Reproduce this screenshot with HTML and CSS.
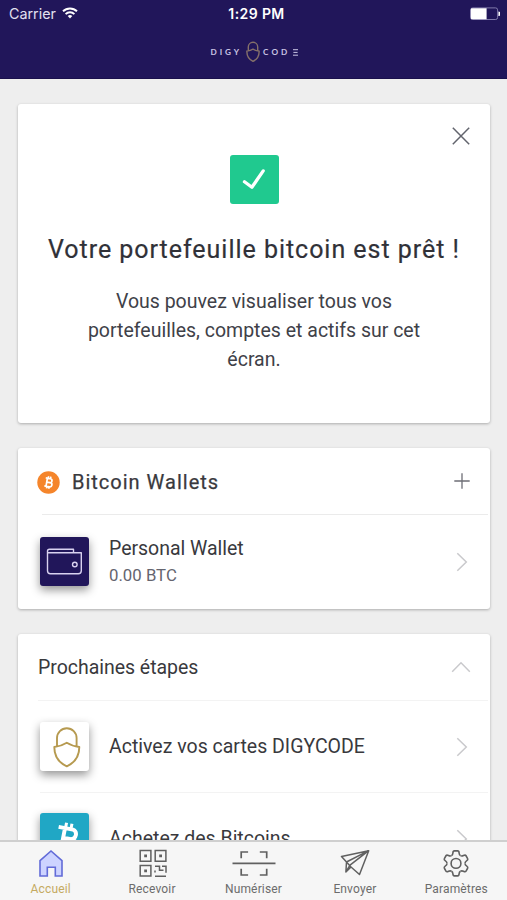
FILE: index.html
```html
<!DOCTYPE html>
<html lang="fr">
<head>
<meta charset="utf-8">
<title>Digycode</title>
<link rel="stylesheet" href="styles.css">
</head>
<body>
<div class="app">
  <header class="header">
    <div class="status">
      <div class="carrier"><span>Carrier</span>
        <svg width="16" height="12" viewBox="0 0 16 12" fill="none" stroke="#fff" stroke-width="1.9"><path d="M1 4.3a10 10 0 0 1 14 0M3.6 7.1a6.2 6.2 0 0 1 8.8 0"/><path d="M8 11.4L5.7 9.1a3.3 3.3 0 0 1 4.6 0z" fill="#fff" stroke="none"/></svg>
      </div>
      <div class="time">1:29 PM</div>
      <div class="battery">
        <svg width="30" height="14" viewBox="0 0 30 14"><rect x=".6" y=".9" width="27" height="11.6" rx="2" fill="none" stroke="#8b84b4" stroke-width=".9"/><path d="M2 1.2h14.6v11H2a1.2 1.2 0 0 1-1.2-1.2V2.4A1.2 1.2 0 0 1 2 1.2z" fill="#fff"/><path d="M28.4 4.6a2.2 2.2 0 0 1 0 4.4z" fill="#fff"/></svg>
      </div>
    </div>
    <div class="brand">
      <span class="digy">DIGY</span>
      <svg width="14" height="22" viewBox="0 0 14 22" fill="none" stroke="#85706a" stroke-width="1.4"><path d="M2.300 9.500V6a4.700 4.700 0 0 1 9.400 0v3.500M.9 10.100Q4.400 9.800 7 8.200 9.600 9.800 13.100 10.100C13.300 15 10.500 18.600 7 20.300 3.500 18.600.7 15 .9 10.100z"/></svg>
      <span class="code">COD</span>
      <svg class="bars" width="5" height="7" viewBox="0 0 5 7" stroke="#c9c4e3" stroke-width="1"><path d="M0 .7h5M.4 3.400h4.200M0 6.200h5"/></svg>
    </div>
  </header>

  <main class="content">
    <section class="card welcome">
      <svg class="close" width="18" height="18" viewBox="0 0 18 18" stroke="#62646d" stroke-width="1.500"><path d="M.8.8l16.400 16.400M17.200.8L.8 17.200"/></svg>
      <div class="check"><svg width="49" height="49" viewBox="0 0 49 49" fill="none" stroke="#fff" stroke-width="3.300" stroke-linecap="round" stroke-linejoin="round"><path d="M14.500 26.800l7.400 5.500 11.300-16.400"/></svg></div>
      <h1>Votre portefeuille bitcoin est prêt !</h1>
      <p>Vous pouvez visualiser tous vos<br>portefeuilles, comptes et actifs sur cet<br>écran.</p>
    </section>

    <section class="card wallets">
      <div class="wallets-head">
        <svg width="23" height="23" viewBox="0 0 23 23"><circle cx="11.500" cy="11.500" r="11.200" fill="#f5852b"/><g transform="rotate(10 11.500 11.500)" fill="none" stroke="#fff" stroke-width="1.700"><path d="M8 7.500h4.700a1.900 1.900 0 0 1 0 3.900H9.600h3.600a2.100 2.100 0 0 1 0 4.200H8M9.700 7.500v8.100M10.600 5.300v2M12.800 5.300v2M10.600 15.600v2M12.800 15.600v2"/></g></svg>
        <h2>Bitcoin Wallets</h2>
        <svg class="plus" width="16" height="16" viewBox="0 0 16 16" stroke="#6d6e76" stroke-width="1.300"><path d="M8 .3v15.400M.3 8h15.400"/></svg>
      </div>
      <div class="row wallet-row">
        <div class="tile navy"><svg width="49" height="49" viewBox="0 0 49 49" fill="none" stroke="#d9d2f0" stroke-width="1.400" stroke-linejoin="round"><path d="M33.500 15.500v-3.300H9.500a2 2 0 0 0-2 2v19.600a3 3 0 0 0 3 3h27.800a3 3 0 0 0 3-3V15.700H8"/><circle cx="34.800" cy="27.500" r="2.300"/></svg></div>
        <div class="label"><div class="name">Personal Wallet</div><div class="amount">0.00 BTC</div></div>
        <svg class="chevron" width="12" height="20" viewBox="0 0 12 20" fill="none" stroke="#c9c9cc" stroke-width="1.500"><path d="M1.300 1.200L10.300 10l-9 8.800"/></svg>
      </div>
    </section>

    <section class="card steps">
      <div class="steps-head"><h3>Prochaines étapes</h3>
        <svg width="20" height="12" viewBox="0 0 20 12" fill="none" stroke="#c9c9cc" stroke-width="1.500"><path d="M1.200 10.700L10 1.700l8.800 9"/></svg>
      </div>
      <div class="row step">
        <div class="tile white"><svg width="49" height="49" viewBox="0 0 49 49" fill="none" stroke="#b69a50" stroke-width="1.900" stroke-linejoin="round"><path d="M17 24V16a9.800 9.800 0 0 1 19.600 0v8M14.300 25Q21.500 24.200 26.800 20.800 32 24.200 39.300 25C39.300 34 34.500 40.800 26.800 44.300 19 40.800 14.300 34 14.300 25z"/></svg></div>
        <div class="name">Activez vos cartes DIGYCODE</div>
        <svg class="chevron" width="12" height="20" viewBox="0 0 12 20" fill="none" stroke="#c9c9cc" stroke-width="1.500"><path d="M1.300 1.200L10.300 10l-9 8.800"/></svg>
      </div>
      <div class="row step">
        <div class="tile teal"><svg width="49" height="49" viewBox="0 0 49 49" fill="none" stroke="#fff" stroke-width="3.900"><g transform="translate(1 1) rotate(11 28 25)"><path d="M15.500 15H30a5 5 0 0 1 0 9.800H22h9a5.500 5.500 0 0 1 0 11H16M22 15v20"/><path stroke-width="3" d="M22.500 9.500v5M28 9.500v5M22.500 36v4M28 36v4"/></g></svg></div>
        <div class="name">Achetez des Bitcoins</div>
        <svg class="chevron" width="12" height="20" viewBox="0 0 12 20" fill="none" stroke="#c9c9cc" stroke-width="1.500"><path d="M1.300 1.200L10.300 10l-9 8.800"/></svg>
      </div>
    </section>
  </main>

  <nav class="tabs">
    <div class="tab active">
      <svg width="44" height="32" viewBox="0 0 44 32" stroke="#626bd8" stroke-width="1.600" fill="#cdd3ff"><path d="M11 12.600L22 3l11 9.600V28h-6.700v-8.700h-8V28H11z"/></svg>
      <span>Accueil</span>
    </div>
    <div class="tab">
      <svg width="44" height="32" viewBox="0 0 44 32" stroke="#606060" stroke-width="1.500" fill="none"><path d="M9.200 2.500h10.700v10.700H9.200zM24.200 2.500h10.700v10.700H24.200zM9.200 17.400h10.700v10.700H9.200zM24 18.200h4.500v4h4M31 18.200h4v6.500M24 24.500v-2M24 28.200h11"/><g fill="#606060" stroke="none"><path d="M13.200 6.500H16v2.800h-2.800zM28.200 6.500H31v2.800h-2.800zM13.200 21.400H16v2.800h-2.800z"/></g></svg>
      <span>Recevoir</span>
    </div>
    <div class="tab">
      <svg width="44" height="32" viewBox="0 0 44 32" stroke="#606060" stroke-width="1.700" fill="none"><path d="M.5 15.400h43M9.200 10.300V4h6.900M27.800 4h6.900v6.300M9.200 20.700V27h6.900M27.800 27h6.900v-6.300"/></svg>
      <span>Numériser</span>
    </div>
    <div class="tab">
      <svg width="44" height="32" viewBox="0 0 44 32" stroke="#606060" stroke-width="1.500" fill="none" stroke-linejoin="round"><path d="M35.700 2.700L8.500 8.500l5 5.500-.6 10L18 19l8.500 7.500zM35.700 2.700L13.500 14l4.500 5M35.700 2.700L17 17.200 12.900 24"/></svg>
      <span>Envoyer</span>
    </div>
    <div class="tab gear">
      <svg width="44" height="32" viewBox="0 0 44 32" stroke="#606060" stroke-width="1.600" fill="none" stroke-linejoin="round"><defs><path id="tooth" d="M-4.500-7.800Q-3.200-8.600-3.100-10.400-3-12.500-1.600-12.500H1.600Q3-12.500 3.100-10.400 3.200-8.600 4.500-7.800"/></defs><g transform="translate(22 15.400)"><circle r="4.900"/><use href="#tooth"/><use href="#tooth" transform="rotate(60)"/><use href="#tooth" transform="rotate(120)"/><use href="#tooth" transform="rotate(180)"/><use href="#tooth" transform="rotate(240)"/><use href="#tooth" transform="rotate(300)"/></g></svg>
      <span>Paramètres</span>
    </div>
  </nav>
</div>
</body>
</html>
```

FILE: styles.css
```css
* { box-sizing: border-box; }
body { margin: 0; background: #eeeeee; color: #39393d; font-family: Roboto, "Liberation Sans", sans-serif; }
svg { display: block; flex: none; }
h1, h2, h3, p { margin: 0; font-weight: 400; white-space: nowrap; }
.app { height: 900px; display: flex; flex-direction: column; overflow: hidden; }

.header { height: 79px; flex: none; background: #21165a; border-bottom: 1px solid #1a104c; color: #fff; }
.status { display: grid; grid-template-columns: 1fr auto 1fr; align-items: center; height: 27px; padding: 0 7px 0 9px; font-family: Inter, sans-serif; font-size: 14.300px; }
.carrier { display: flex; align-items: center; gap: 6px; color: #e3e0f0; }
.carrier svg { margin-top: -2px; }
.time { font-weight: 600; font-size: 14px; letter-spacing: .4px; padding-left: 4px; }
.battery { display: flex; justify-content: flex-end; }
.brand { display: flex; align-items: center; height: 24px; margin-top: 13px; padding-left: 210.500px; font: 700 8.200px Lato, sans-serif; color: #c9c4e3; }
.digy { letter-spacing: 2.900px; width: 35px; }
.code { letter-spacing: 3.100px; margin-left: 3.500px; width: 29.500px; }

.content { flex: 1; min-height: 0; overflow: hidden; padding: 25px 17px 0 18px; display: flex; flex-direction: column; gap: 25px; }
.card { flex: none; background: #fff; border-radius: 3px; box-shadow: 0 1px 3px rgba(0,0,0,.28); }
.welcome { position: relative; height: 319px; padding-top: 51px; text-align: center; }
.close { position: absolute; top: 23px; right: 20px; }
.check { width: 49px; height: 49px; margin: 0 auto 0 211.500px; border-radius: 3px; background: #20c98f; }
h1 { margin-top: 30px; font-size: 25px; line-height: 32px; font-weight: 400; letter-spacing: .970px; -webkit-text-stroke: .2px; color: #303138; }
.welcome p { margin-top: 21px; font-size: 19.500px; line-height: 29.200px; color: #404148; }

.wallets { height: 161px; }
.wallets-head { display: flex; align-items: center; height: 67px; margin: 0 2px 0 24px; padding-right: 18px; border-bottom: 1px solid #ebebeb; }
.wallets-head > svg:first-child { margin: 3px 0 0 -5px; }
h2 { margin: 1px 0 0 12px; font-size: 20px; font-weight: 400; letter-spacing: 1px; -webkit-text-stroke: .25px; }
.plus { margin-left: auto; }
.row { display: flex; align-items: center; padding: 0 22px; }
.wallet-row { height: 94px; }
.tile { width: 49px; height: 49px; flex: none; margin-top: -1px; border-radius: 3px; overflow: hidden; box-shadow: 0 4px 10px rgba(0,0,0,.42); }
.navy { background: #21165a; }
.white { background: #fff; }
.teal { background: #20a7c5; margin-top: -2px; }
.name { font-size: 19.500px; line-height: 26px; white-space: nowrap; }
.label { margin: -1px 0 0 20px; }
.wallet-row .name { letter-spacing: -.03px; }
.amount { font-size: 16.800px; line-height: 26px; color: #65656f; }
.chevron { margin-left: auto; }

.steps-head { height: 67px; display: flex; align-items: center; justify-content: space-between; margin: 0 2px 0 20px; padding-right: 17px; border-bottom: 1px solid #f3f3f3; }
h3 { font-size: 19.500px; letter-spacing: -.03px; }
.step { height: 92px; padding: 0 20px 0 0; margin: 0 2px 0 22px; border-bottom: 1px solid #f3f3f3; }
.step .name { margin-left: 20px; }

.tabs { height: 60px; flex: none; display: grid; grid-template-columns: repeat(5, 1fr); background: #f6f6f6; border-top: 2px solid #cfcfcf; }
.tab { display: flex; flex-direction: column; align-items: center; padding-top: 6px; font-size: 12px; line-height: 16px; color: #6c6c6c; letter-spacing: .15px; }
.tab svg { margin-left: 1px; }
.tab.gear svg { margin-left: -1px; }
.tab span { margin-top: 1px; }
.active { color: #c5aa61; }
```
